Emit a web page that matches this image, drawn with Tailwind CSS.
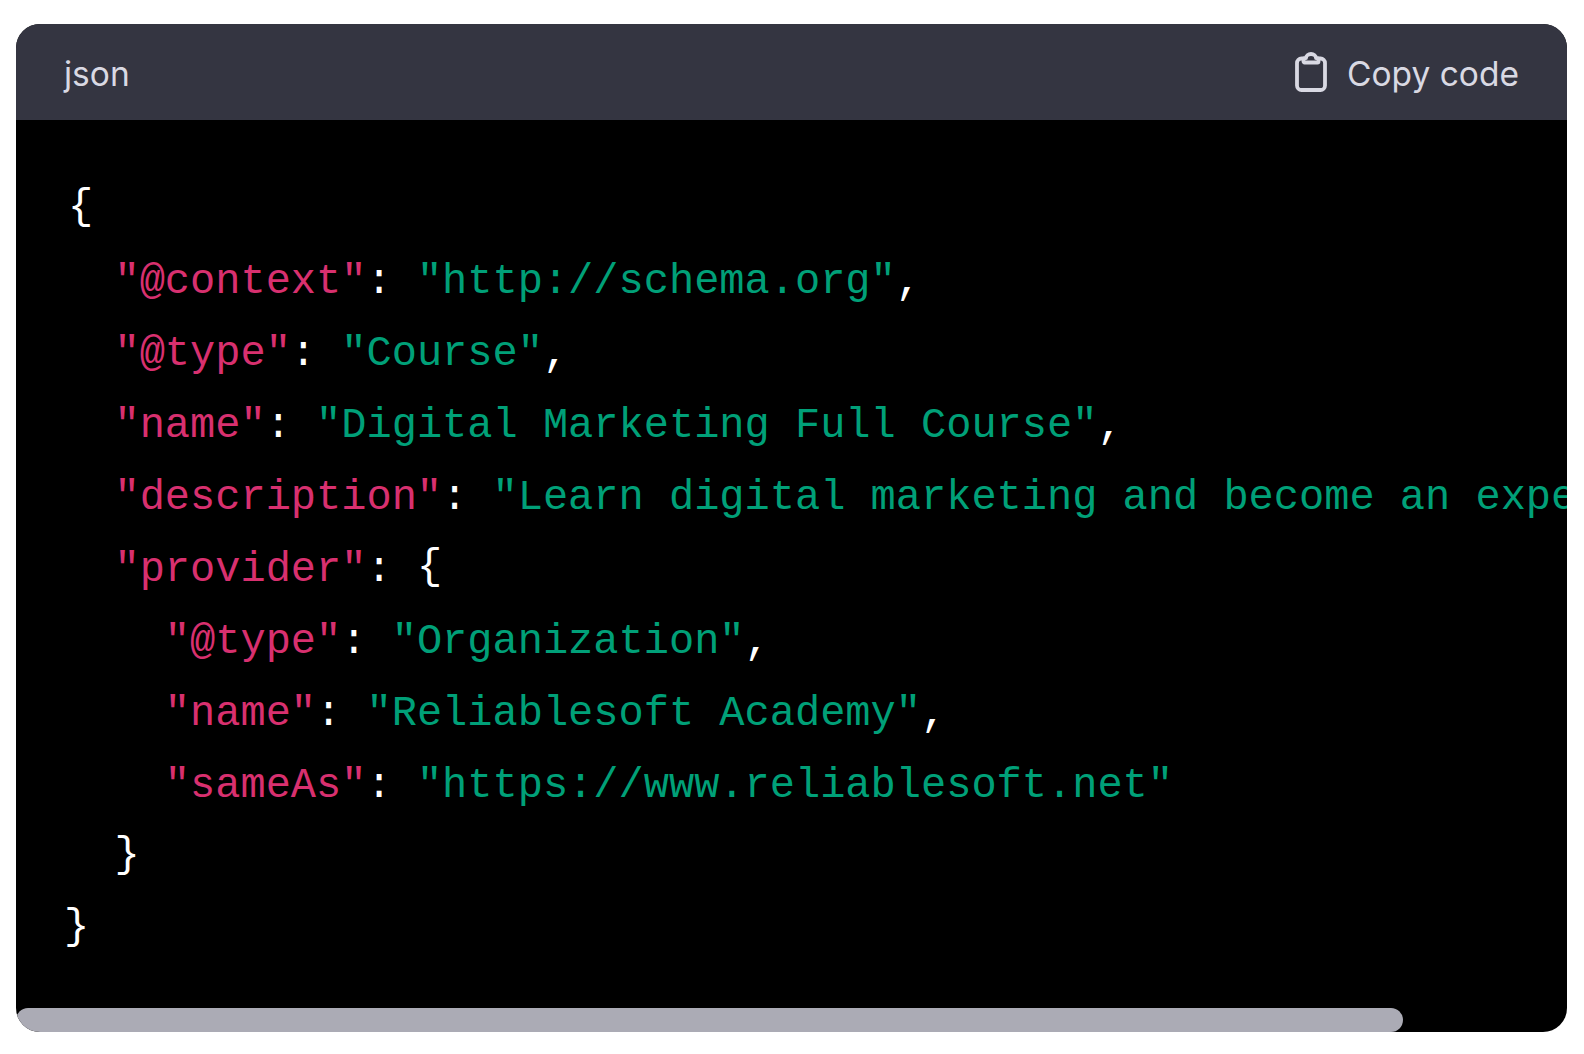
<!DOCTYPE html>
<html lang="en">

<head>
  <meta charset="UTF-8">
  <meta name="viewport" content="width=device-width, initial-scale=1.0">
  <title>Code block</title>
  <script src="https://cdn.jsdelivr.net/npm/@tailwindcss/browser@4"></script>
</head>

<body class="bg-white h-[1054px] overflow-hidden">
  <div class="pt-6 pl-4 pr-[17px]">
    <div class="bg-black rounded-3xl overflow-hidden h-[1008px] flex flex-col">
      <!-- Header -->
      <div class="h-24 shrink-0 bg-[#343541] flex items-center justify-between pt-1 pl-12 pr-12 text-[#d9d9e3] text-[33.500px] font-['Inter',sans-serif]">
        <span>json</span>
        <button class="flex items-center gap-5">
          <svg class="w-8 h-10 -mt-1" viewBox="0 0 32 40" fill="none" stroke="#d9d9e3" stroke-width="3.800" stroke-linecap="round" stroke-linejoin="round">
            <path d="M8 6.500H6.500a4.500 4.500 0 0 0-4.500 4.500v22.500a4.500 4.500 0 0 0 4.500 4.500h19a4.500 4.500 0 0 0 4.500-4.500V11a4.500 4.500 0 0 0-4.500-4.500H24" />
            <path d="M8.500 9.500V8a2 2 0 0 1 2-2h.5a5 4 0 0 1 10 0h.5a2 2 0 0 1 2 2v1.500a1 1 0 0 1-1 1h-13a1 1 0 0 1-1-1z" />
          </svg>
          <span>Copy code</span>
        </button>
      </div>

      <!-- Code -->
      <div class="flex-1 overflow-hidden pt-[54px] pl-12 whitespace-pre text-[42px] leading-[72px] text-white font-['Liberation_Mono',monospace]"><code class="block"><span class="inline-block ml-[4px] -translate-y-[3px]">{</span>
  <span class="text-[#d8306f]">"@context"</span>: <span class="text-[#00a078]">"http://schema.org"</span>,
  <span class="text-[#d8306f]">"@type"</span>: <span class="text-[#00a078]">"Course"</span>,
  <span class="text-[#d8306f]">"name"</span>: <span class="text-[#00a078]">"Digital Marketing Full Course"</span>,
  <span class="text-[#d8306f]">"description"</span>: <span class="text-[#00a078]">"Learn digital marketing and become an expert"</span>,
  <span class="text-[#d8306f]">"provider"</span>: <span class="inline-block -translate-y-[3px]">{</span>
    <span class="text-[#d8306f]">"@type"</span>: <span class="text-[#00a078]">"Organization"</span>,
    <span class="text-[#d8306f]">"name"</span>: <span class="text-[#00a078]">"Reliablesoft Academy"</span>,
    <span class="text-[#d8306f]">"sameAs"</span>: <span class="text-[#00a078]">"https://www.reliablesoft.net"</span>
  <span class="inline-block -translate-y-[3px]">}</span>
<span class="inline-block -translate-y-[3px]">}</span></code></div>

      <!-- Scrollbar -->
      <div class="h-6 shrink-0">
        <div class="h-full w-[1387px] rounded-full bg-[#ababb5]"></div>
      </div>
    </div>
  </div>
</body>

</html>
